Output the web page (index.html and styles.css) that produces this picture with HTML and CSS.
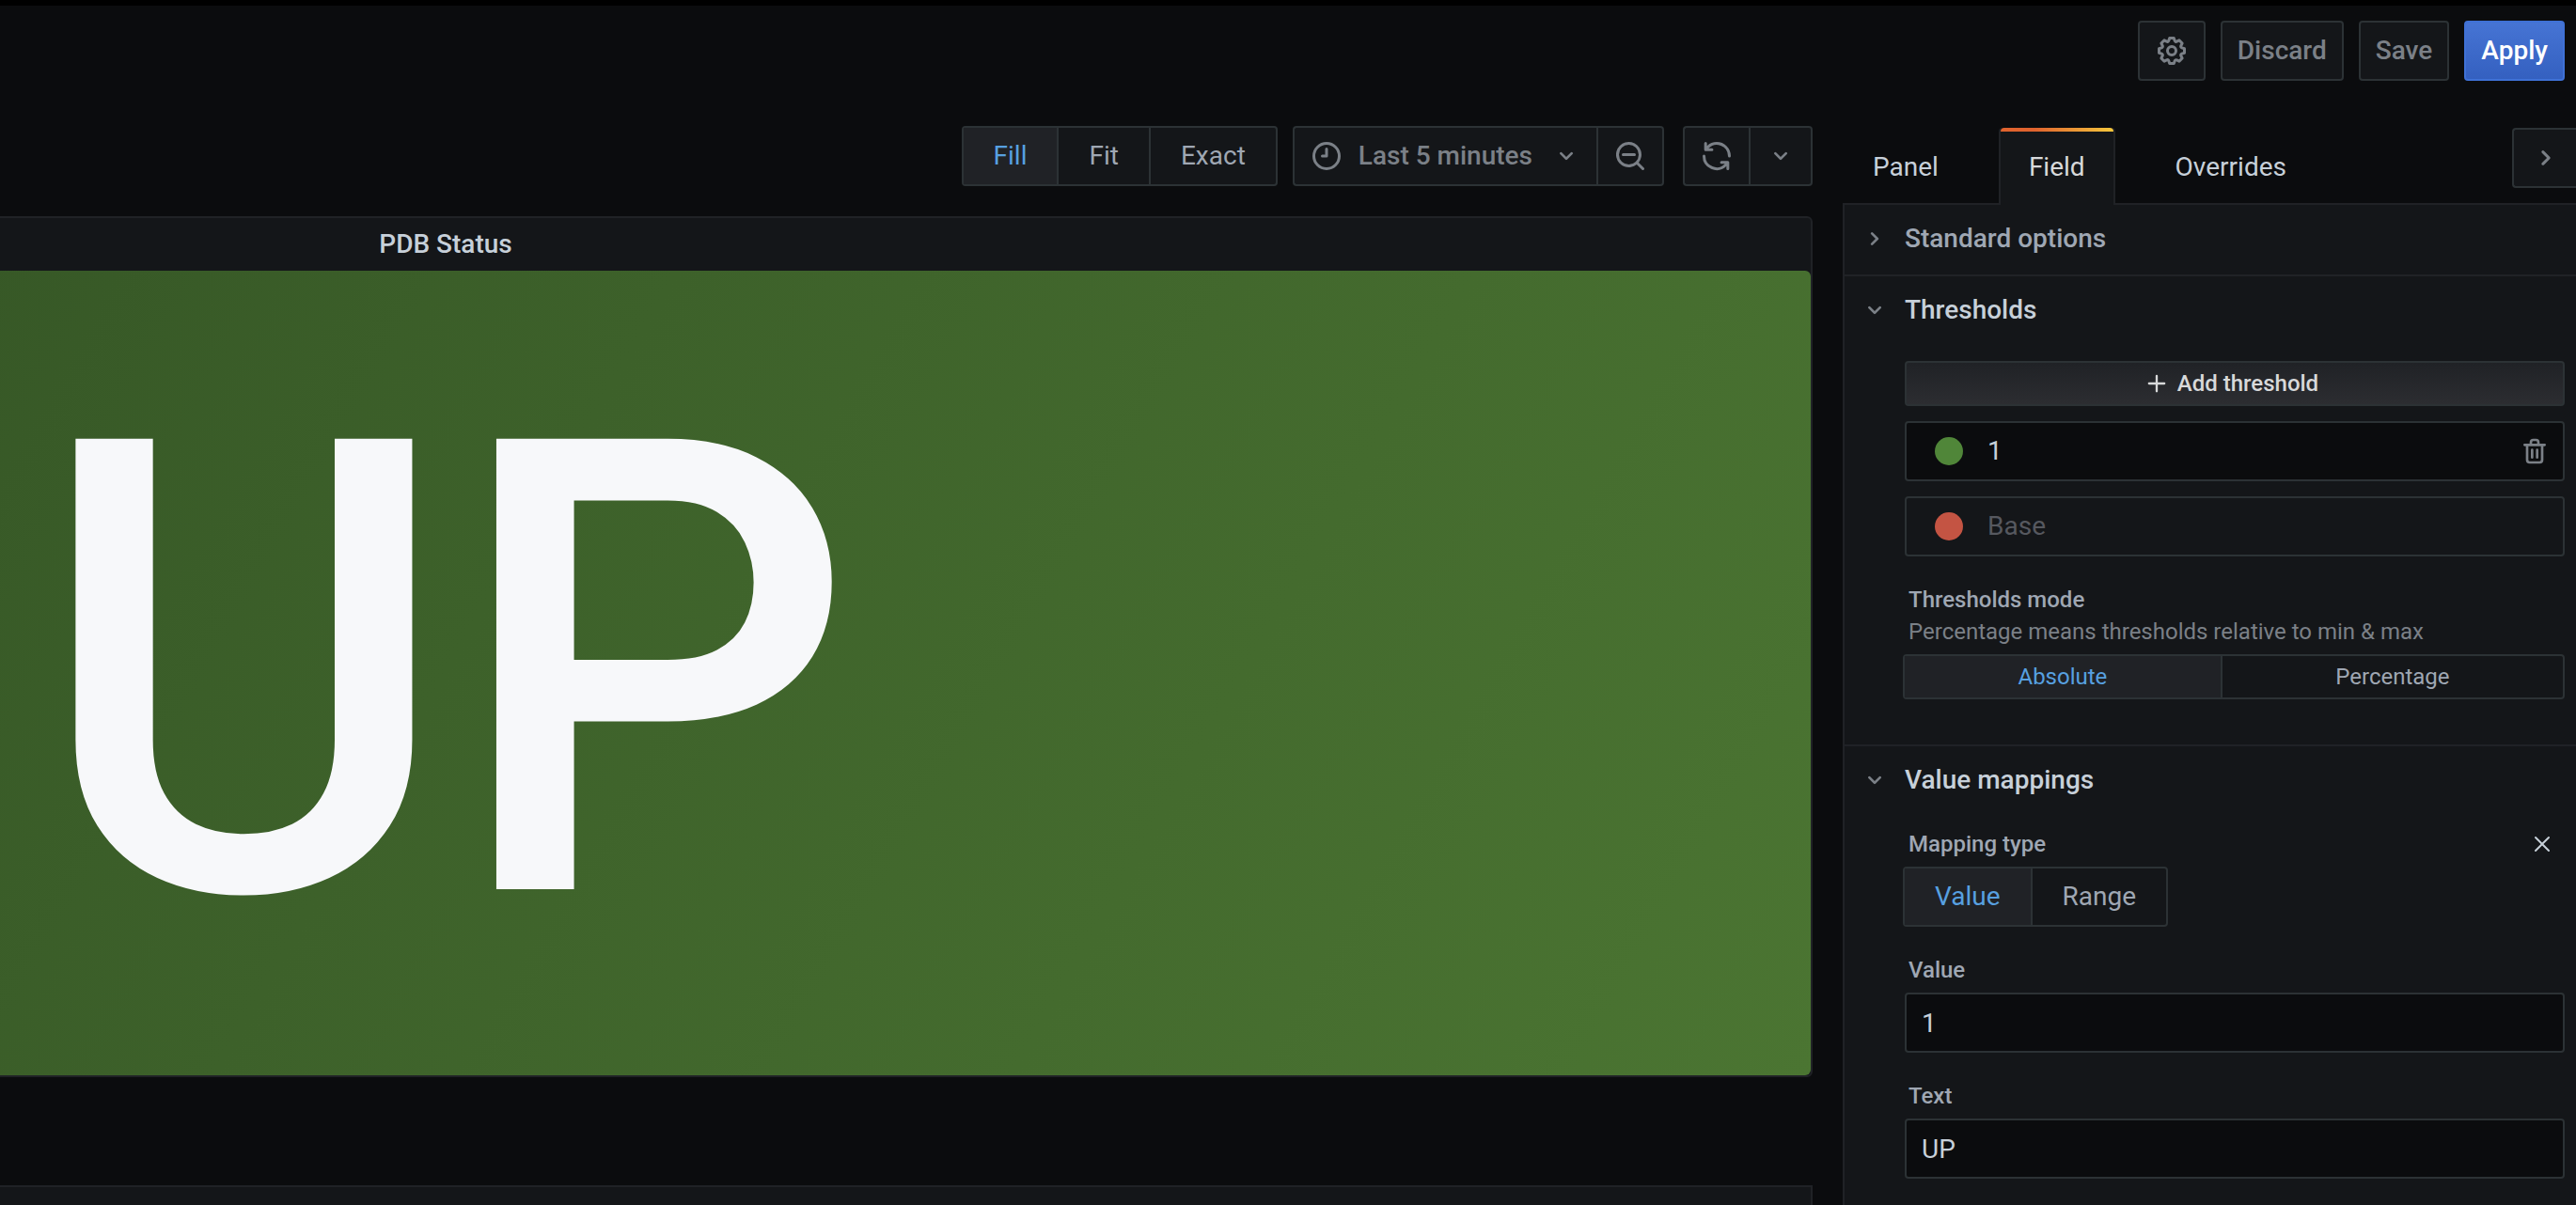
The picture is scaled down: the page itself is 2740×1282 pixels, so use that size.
FILE: index.html
```html
<!DOCTYPE html>
<html lang="en">
<head>
<meta charset="utf-8">
<meta name="viewport" content="width=device-width, initial-scale=1">
<title>Edit panel</title>
<link rel="stylesheet" href="styles.css">
</head>
<body>
<svg class="sprite" aria-hidden="true">
  <symbol id="cog" viewBox="0 0 24 24"><path d="M21.32,9.55l-1.89-.63.89-1.78A1,1,0,0,0,20.13,6L18,3.87a1,1,0,0,0-1.15-.19l-1.78.89-.63-1.89A1,1,0,0,0,13.5,2h-3a1,1,0,0,0-.95.68L8.92,4.57,7.14,3.68A1,1,0,0,0,6,3.87L3.87,6a1,1,0,0,0-.19,1.15l.89,1.78-1.89.63A1,1,0,0,0,2,10.5v3a1,1,0,0,0,.68.95l1.89.63-.89,1.78A1,1,0,0,0,3.87,18L6,20.13a1,1,0,0,0,1.15.19l1.78-.89.63,1.89a1,1,0,0,0,.95.68h3a1,1,0,0,0,.95-.68l.63-1.89,1.78.89A1,1,0,0,0,18,20.13L20.13,18a1,1,0,0,0,.19-1.15l-.89-1.78,1.89-.63A1,1,0,0,0,22,13.5v-3A1,1,0,0,0,21.32,9.55ZM20,12.78l-1.2.4A2,2,0,0,0,17.64,16l.57,1.14-1.1,1.1L16,17.64a2,2,0,0,0-2.79,1.16l-.4,1.2H11.22l-.4-1.2A2,2,0,0,0,8,17.64l-1.14.57-1.1-1.1L6.36,16A2,2,0,0,0,5.2,13.18L4,12.78V11.22l1.2-.4A2,2,0,0,0,6.36,8L5.79,6.89l1.1-1.1L8,6.36A2,2,0,0,0,10.82,5.2l.4-1.2h1.56l.4,1.2A2,2,0,0,0,16,6.36l1.14-.57,1.1,1.1L17.64,8a2,2,0,0,0,1.16,2.79l1.2.4ZM12,8a4,4,0,1,0,4,4A4,4,0,0,0,12,8Zm0,6a2,2,0,1,1,2-2A2,2,0,0,1,12,14Z"/></symbol>
  <symbol id="clock" viewBox="0 0 24 24"><path d="M12,2A10,10,0,1,0,22,12,10,10,0,0,0,12,2Zm0,18a8,8,0,1,1,8-8A8,8,0,0,1,12,20ZM12,6a1,1,0,0,0-1,1v4H9a1,1,0,0,0,0,2h3a1,1,0,0,0,1-1V7A1,1,0,0,0,12,6Z"/></symbol>
  <symbol id="zoom-out" viewBox="0 0 24 24"><path d="M21.71,20.29,18,16.61A9,9,0,1,0,16.61,18l3.68,3.68a1,1,0,0,0,1.42,0A1,1,0,0,0,21.71,20.29ZM11,18a7,7,0,1,1,7-7A7,7,0,0,1,11,18Zm4-8H7a1,1,0,0,0,0,2h8a1,1,0,0,0,0-2Z"/></symbol>
  <symbol id="sync" viewBox="0 0 24 24"><path d="M19.91,15.51H15.38a1,1,0,0,0,0,2h2.4A8,8,0,0,1,4,12a1,1,0,1,0-2,0,10,10,0,0,0,16.88,7.23V21a1,1,0,0,0,2,0V16.5A1,1,0,0,0,19.91,15.51ZM12,2A10,10,0,0,0,5.12,4.77V3a1,1,0,0,0-2,0V7.5a1,1,0,0,0,1,1h4.5a1,1,0,0,0,0-2H6.22A8,8,0,0,1,20,12a1,1,0,0,0,2,0A10,10,0,0,0,12,2Z"/></symbol>
  <symbol id="angle-down" viewBox="0 0 24 24"><path d="M17,9.17a1,1,0,0,0-1.41,0L12,12.71,8.46,9.17a1,1,0,0,0-1.41,0,1,1,0,0,0,0,1.42l4.24,4.24a1,1,0,0,0,1.42,0L17,10.59A1,1,0,0,0,17,9.17Z"/></symbol>
  <symbol id="angle-right" viewBox="0 0 24 24"><path d="M14.83,11.29,10.59,7.05a1,1,0,0,0-1.42,0,1,1,0,0,0,0,1.41L12.71,12,9.17,15.54a1,1,0,0,0,0,1.41,1,1,0,0,0,.71.29,1,1,0,0,0,.71-.29l4.24-4.24A1,1,0,0,0,14.83,11.29Z"/></symbol>
  <symbol id="plus" viewBox="0 0 24 24"><path d="M19,11H13V5a1,1,0,0,0-2,0v6H5a1,1,0,0,0,0,2h6v6a1,1,0,0,0,2,0V13h6a1,1,0,0,0,0-2Z"/></symbol>
  <symbol id="trash" viewBox="0 0 24 24"><path d="M10,18a1,1,0,0,0,1-1V11a1,1,0,0,0-2,0v6A1,1,0,0,0,10,18ZM20,6H16V5a3,3,0,0,0-3-3H11A3,3,0,0,0,8,5V6H4A1,1,0,0,0,4,8H5V19a3,3,0,0,0,3,3h8a3,3,0,0,0,3-3V8h1a1,1,0,0,0,0-2ZM10,5a1,1,0,0,1,1-1h2a1,1,0,0,1,1,1V6H10Zm7,14a1,1,0,0,1-1,1H8a1,1,0,0,1-1-1V8H17Zm-3-1a1,1,0,0,0,1-1V11a1,1,0,0,0-2,0v6A1,1,0,0,0,14,18Z"/></symbol>
  <symbol id="times" viewBox="0 0 24 24"><path d="M13.41,12l6.3-6.29a1,1,0,1,0-1.42-1.42L12,10.59,5.71,4.29A1,1,0,0,0,4.29,5.71L10.59,12l-6.3,6.29a1,1,0,0,0,0,1.42,1,1,0,0,0,1.42,0L12,13.41l6.29,6.3a1,1,0,0,0,1.42,0,1,1,0,0,0,0-1.42Z"/></symbol>
</svg>

<header class="page-bar">
  <button class="btn" type="button" aria-label="Dashboard settings"><svg class="icon icon-lg"><use href="#cog"/></svg></button>
  <button class="btn" type="button">Discard</button>
  <button class="btn" type="button">Save</button>
  <button class="btn btn-primary" type="button">Apply</button>
</header>

<div class="workspace">
  <main class="preview">
    <div class="toolbar">
      <fieldset class="radio-group" aria-label="Panel size">
        <input type="radio" name="size" id="size-fill" checked><label for="size-fill">Fill</label>
        <input type="radio" name="size" id="size-fit"><label for="size-fit">Fit</label>
        <input type="radio" name="size" id="size-exact"><label for="size-exact">Exact</label>
      </fieldset>
      <div class="btn-group time-group">
        <button class="btn" type="button"><svg class="icon icon-lg"><use href="#clock"/></svg><span class="time-range">Last 5 minutes</span><svg class="icon"><use href="#angle-down"/></svg></button>
        <button class="btn" type="button" aria-label="Zoom out"><svg class="icon icon-lg"><use href="#zoom-out"/></svg></button>
      </div>
      <div class="btn-group">
        <button class="btn" type="button" aria-label="Refresh"><svg class="icon icon-lg"><use href="#sync"/></svg></button>
        <button class="btn" type="button" aria-label="Refresh interval"><svg class="icon"><use href="#angle-down"/></svg></button>
      </div>
    </div>

    <section class="panel">
      <h1 class="panel-title">PDB Status</h1>
      <div class="stat">UP</div>
    </section>
    <section class="query-pane" aria-label="Query"></section>
  </main>

  <aside class="options">
    <div class="tab-bar">
      <nav class="tabs">
        <a class="tab" href="#panel">Panel</a>
        <a class="tab tab-active" href="#field">Field</a>
        <a class="tab" href="#overrides">Overrides</a>
      </nav>
      <button class="collapse" type="button" aria-label="Hide options"><svg class="icon icon-lg"><use href="#angle-right"/></svg></button>
    </div>

    <div class="options-body">
      <section class="group">
        <h2><button class="group-head" type="button"><svg class="icon"><use href="#angle-right"/></svg>Standard options</button></h2>
      </section>

      <section class="group">
        <h2><button class="group-head open" type="button"><svg class="icon"><use href="#angle-down"/></svg>Thresholds</button></h2>
        <div class="group-content thresholds">
          <button class="add" type="button"><svg class="icon icon-sm"><use href="#plus"/></svg>Add threshold</button>
          <div class="threshold">
            <button class="dot dot-green" type="button" aria-label="Green"></button>
            <input type="text" value="1" aria-label="Threshold value">
            <button class="icon-btn" type="button" aria-label="Remove threshold"><svg class="icon"><use href="#trash"/></svg></button>
          </div>
          <div class="threshold threshold-base">
            <button class="dot dot-red" type="button" aria-label="Red"></button>
            <input type="text" value="Base" aria-label="Base threshold" disabled>
          </div>
          <div class="field">
            <div class="label" id="mode-label">Thresholds mode</div>
            <p class="hint">Percentage means thresholds relative to min &amp; max</p>
            <fieldset class="radio-group radio-small" aria-labelledby="mode-label">
              <input type="radio" name="mode" id="mode-abs" checked><label for="mode-abs">Absolute</label>
              <input type="radio" name="mode" id="mode-pct"><label for="mode-pct">Percentage</label>
            </fieldset>
          </div>
        </div>
      </section>

      <section class="group">
        <h2><button class="group-head open" type="button"><svg class="icon"><use href="#angle-down"/></svg>Value mappings</button></h2>
        <div class="group-content mappings">
          <div class="field">
            <div class="label-row">
              <div class="label" id="type-label">Mapping type</div>
              <button class="icon-btn icon-btn-light" type="button" aria-label="Remove mapping"><svg class="icon icon-xs"><use href="#times"/></svg></button>
            </div>
            <fieldset class="radio-group radio-inset" aria-labelledby="type-label">
              <input type="radio" name="type" id="type-value" checked><label for="type-value">Value</label>
              <input type="radio" name="type" id="type-range"><label for="type-range">Range</label>
            </fieldset>
          </div>
          <div class="field">
            <label class="label" for="map-value">Value</label>
            <input class="text-input" id="map-value" type="text" value="1">
          </div>
          <div class="field">
            <label class="label" for="map-text">Text</label>
            <input class="text-input" id="map-text" type="text" value="UP">
          </div>
        </div>
      </section>
    </div>
  </aside>
</div>
</body>
</html>
```

FILE: styles.css
```css
:root {
  --canvas: #0b0c0e;
  --surface: #141619;
  --raised: #202226;
  --line: #202226;
  --control-line: #2c3235;
  --text: #c7d0d9;
  --text-soft: #9fa7b3;
  --text-weak: #7b8087;
  --accent: #57a0e0;
}

* { box-sizing: border-box; }

body {
  margin: 0;
  min-height: 100vh;
  display: flex;
  flex-direction: column;
  border-top: 6px solid #000;
  background: var(--canvas);
  color: var(--text);
  font: 400 28px/36px Roboto, "Liberation Sans", sans-serif;
  overflow-x: hidden;
}

button, input { font: inherit; color: inherit; }
button { cursor: pointer; }
h1, h2, p { margin: 0; font: inherit; }
fieldset { margin: 0; padding: 0; min-width: 0; border: 0; }

.sprite { position: absolute; width: 0; height: 0; }

.icon { width: 32px; height: 32px; flex: none; fill: currentColor; }
.icon-lg { width: 36px; height: 36px; }
.icon-sm { width: 28px; height: 28px; }
.icon-xs { width: 24px; height: 24px; }

/* Buttons */
.btn {
  display: flex;
  align-items: center;
  justify-content: center;
  gap: 16px;
  height: 64px;
  padding: 0 16px;
  border: 2px solid var(--control-line);
  border-radius: 4px;
  background: var(--surface);
  color: var(--text-weak);
  font-weight: 500;
}

.btn-primary {
  border-color: #3f71d6;
  background: linear-gradient(#4674d4, #3460c0);
  color: #fff;
}

.btn-group { display: flex; }
.btn-group .btn:not(:last-child) { border-right: 0; border-radius: 4px 0 0 4px; }
.btn-group .btn:last-child { border-radius: 0 4px 4px 0; }
.time-group { margin-right: 4px; }
.time-range { margin-right: 4px; }

.icon-btn {
  display: flex;
  align-items: center;
  padding: 0;
  border: 0;
  background: none;
  color: var(--text-weak);
}
.icon-btn-light { height: 28px; color: var(--text); }

/* Radio button groups */
.radio-group {
  position: relative;
  display: flex;
  border: 2px solid var(--control-line);
  border-radius: 4px;
  background: var(--surface);
  color: var(--text-soft);
}
.radio-group input { position: absolute; opacity: 0; margin: 0; pointer-events: none; }
.radio-group label {
  display: flex;
  align-items: center;
  justify-content: center;
  flex: 1 1 auto;
  height: 60px;
  padding: 0 32px;
  cursor: pointer;
}
.radio-group label:not(:last-child) { border-right: 2px solid var(--control-line); }
.radio-group input:checked + label { background: var(--raised); color: var(--accent); }
.radio-small { margin-left: -2px; font-size: 24px; }
.radio-small label { height: 44px; }
.radio-inset { width: fit-content; margin-left: -2px; }

/* Page layout */
.page-bar {
  display: flex;
  justify-content: flex-end;
  gap: 16px;
  padding: 16px 12px;
}

.workspace {
  flex: 1;
  display: grid;
  grid-template-columns: minmax(0, 1fr) 780px;
}

.preview {
  display: flex;
  flex-direction: column;
  padding: 32px 32px 0 0;
  overflow: hidden;
}

.toolbar {
  display: flex;
  justify-content: flex-end;
  gap: 16px;
  margin-bottom: 32px;
}

/* The panel is wider than the space left of the options and runs off its left side */
.panel {
  margin-left: -980px;
  border: 2px solid var(--line);
  border-radius: 6px;
  background: var(--surface);
  overflow: hidden;
}
.panel-title {
  height: 56px;
  line-height: 56px;
  font-weight: 500;
  text-align: center;
}
.stat {
  display: flex;
  align-items: center;
  justify-content: center;
  min-height: 856px;
  border-radius: 6px;
  background: linear-gradient(120deg, #2f4d22, #4b7532);
  color: #f7f8fa;
  font-size: 674px;
  font-weight: 500;
  line-height: 790px;
}

.query-pane {
  flex: 1;
  margin-top: 115px;
  border: 2px solid var(--line);
  border-width: 2px 2px 0 0;
  background: var(--surface);
}

/* Options pane */
.options { display: flex; flex-direction: column; padding-top: 34px; }

.tab-bar { display: flex; justify-content: space-between; align-items: flex-start; }
.tabs { display: flex; gap: 32px; margin-bottom: -2px; }
.tab {
  position: relative;
  height: 82px;
  padding: 0 30px;
  border: 2px solid transparent;
  border-width: 0 2px;
  color: var(--text);
  line-height: 84px;
  text-decoration: none;
}
.tab-active {
  border-color: var(--line);
  border-radius: 4px 4px 0 0;
  background: var(--surface);
  color: #d8d9da;
}
.tab-active::before {
  content: "";
  position: absolute;
  top: 0;
  left: 0;
  right: 0;
  height: 4px;
  border-radius: 4px 4px 0 0;
  background: linear-gradient(90deg, #e0632e 30%, #f5c63c 99%);
}

.collapse {
  display: flex;
  align-items: center;
  width: 68px;
  height: 64px;
  padding: 0 0 0 16px;
  border: 2px solid var(--control-line);
  border-right: 0;
  border-radius: 4px 0 0 4px;
  background: var(--surface);
  color: var(--text-weak);
}

.options-body {
  flex: 1;
  border: 2px solid var(--line);
  border-width: 2px 0 0 2px;
  background: var(--surface);
}

.group { padding-bottom: 2px; }
.group:not(:last-child) { border-bottom: 2px solid var(--line); }
.group-head {
  display: flex;
  align-items: center;
  gap: 16px;
  width: 100%;
  height: 72px;
  padding: 0 16px;
  border: 0;
  background: none;
  color: var(--text-soft);
  font-weight: 500;
}
.group-head .icon { color: var(--text-weak); }
.group-head.open { color: var(--text); }

.group-content { display: flex; flex-direction: column; margin: 0 12px 0 64px; }
.thresholds { gap: 16px; padding: 18px 0 46px; }
.thresholds .field { margin-top: 16px; }
.mappings { gap: 32px; padding: 18px 0; }

.add {
  display: flex;
  align-items: center;
  justify-content: center;
  gap: 8px;
  height: 48px;
  padding: 0 16px 0 8px;
  border: 2px solid var(--control-line);
  border-radius: 4px;
  background: linear-gradient(#202226, #2c2d31);
  color: #d8d9da;
  font-size: 24px;
  font-weight: 500;
}

.threshold {
  display: flex;
  align-items: center;
  height: 64px;
  padding: 0 14px 0 30px;
  border: 2px solid var(--control-line);
  border-radius: 4px;
  background: var(--canvas);
}
.threshold-base { background: none; color: #56585f; }
.threshold input {
  flex: 1;
  min-width: 0;
  padding: 0 26px;
  border: 0;
  background: none;
}
.dot { width: 30px; height: 30px; padding: 0; border: 0; border-radius: 50%; }
.dot-green { background: #508639; }
.dot-red { background: #c45443; }

.field { display: flex; flex-direction: column; }
.label {
  margin-bottom: 10px;
  padding-left: 4px;
  color: var(--text-soft);
  font-size: 24px;
  font-weight: 500;
  line-height: 28px;
}
.thresholds .label { margin-bottom: 6px; }
.label-row { display: flex; justify-content: space-between; align-items: flex-start; padding-right: 12px; }
.hint {
  margin-bottom: 10px;
  padding-left: 4px;
  color: var(--text-weak);
  font-size: 24px;
  line-height: 28px;
}
.text-input {
  width: 100%;
  height: 64px;
  padding: 0 16px;
  border: 2px solid var(--control-line);
  border-radius: 4px;
  background: var(--canvas);
}
```
